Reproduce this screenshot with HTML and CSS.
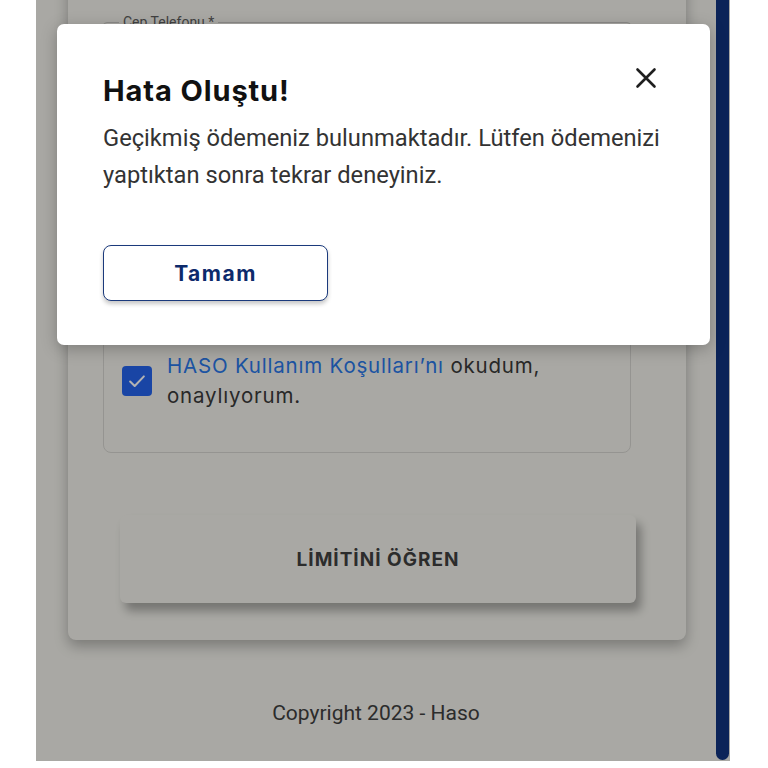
FILE: index.html
```html
<!DOCTYPE html>
<html lang="tr">
<head>
<meta charset="utf-8">
<title>Hata Oluştu</title>
<link rel="stylesheet" href="styles.css">
</head>
<body>
<div class="screen">
  <div class="page">
    <div class="card">
      <fieldset class="field"><legend>Cep Telefonu *</legend></fieldset>
      <div class="terms">
        <span class="checkbox">
          <svg viewBox="0 0 24 24" width="22" height="22"><path d="M4.5 12.5l5 5L19.5 7" fill="none" stroke="#fff" stroke-width="2.2" stroke-linecap="round" stroke-linejoin="round"/></svg>
        </span>
        <p class="terms-text"><span class="terms-link">HASO Kullanım Koşulları’nı</span> okudum, onaylıyorum.</p>
      </div>
      <button class="cta">LİMİTİNİ ÖĞREN</button>
    </div>
    <footer class="copyright">Copyright 2023 - Haso</footer>
  </div>
  <div class="overlay"></div>
  <div class="scrollbar"></div>
  <div class="modal">
    <div class="modal-head">
      <h2 class="modal-title">Hata Oluştu!</h2>
      <button class="close" aria-label="Kapat">
        <svg viewBox="0 0 24 24" width="24" height="24"><path d="M3.5 3.5l17 17M20.5 3.5l-17 17" stroke="#1f1f1f" stroke-width="2.6" stroke-linecap="round"/></svg>
      </button>
    </div>
    <p class="modal-text">Geçikmiş ödemeniz bulunmaktadır. Lütfen ödemenizi yaptıktan sonra tekrar deneyiniz.</p>
    <button class="ok">Tamam</button>
  </div>
</div>
</body>
</html>
```

FILE: styles.css
```css
html, body {
  margin: 0;
  padding: 0;
  background: #ffffff;
}

.screen {
  position: relative;
  margin-left: 36px;
  width: 694px;
  height: 761px;
  overflow: hidden;
  background: #f2f1eb;
}

.page {
  display: flex;
  flex-direction: column;
}

.card {
  margin: -30px 0 0 32px;
  width: 618px;
  box-sizing: border-box;
  padding: 45px 0 37px 0;
  background: #f2f1eb;
  border-radius: 0 0 8px 8px;
  box-shadow: 0 6px 14px rgba(0, 0, 0, 0.28);
  display: flex;
  flex-direction: column;
}

.field {
  margin: 0 0 0 35px;
  width: 528px;
  height: 63px;
  box-sizing: border-box;
  border: 1px solid #c9c8c3;
  border-radius: 4px;
  padding: 0 12px;
}

.field legend {
  padding: 0 4px;
  margin-left: 3px;
  font: 400 14px/1 "Roboto", sans-serif;
  color: #5e5e5e;
}

.terms {
  margin: 222px 0 0 35px;
  width: 528px;
  box-sizing: border-box;
  border: 1px solid #d6d5d0;
  border-radius: 8px;
  padding: 50px 20px 41px 18px;
  display: flex;
  align-items: center;
  gap: 15px;
}

.checkbox {
  flex: none;
  width: 30px;
  height: 30px;
  border-radius: 4px;
  background: #2564ec;
  display: flex;
  align-items: center;
  justify-content: center;
}

.terms-text {
  margin: 0;
  font: 400 20.5px/30px "Inter", sans-serif;
  letter-spacing: 0.8px;
  color: #3a3a3a;
}

.terms-link {
  color: #2a78e8;
}

.cta {
  margin: 62px 0 0 52px;
  width: 516px;
  height: 88px;
  border: none;
  border-radius: 6px;
  background: #f2f1eb;
  box-shadow: 5px 8px 10px rgba(0, 0, 0, 0.3);
  font: 700 19px/1 "Inter", sans-serif;
  color: #404040;
  letter-spacing: 1px;
}

.copyright {
  margin: 61px 14px 0 0;
  text-align: center;
  font: 400 21px/24px "Roboto", sans-serif;
  color: #404040;
}

.overlay {
  position: absolute;
  inset: 0;
  background: rgba(0, 0, 0, 0.3);
}

.scrollbar {
  position: absolute;
  top: 0;
  right: 1px;
  width: 13px;
  height: 760px;
  background: #0b2358;
  border-radius: 0 0 7px 7px;
}

.modal {
  position: absolute;
  left: 21px;
  top: 24px;
  width: 653px;
  height: 321px;
  box-sizing: border-box;
  padding: 50px 30px 0 46px;
  background: #ffffff;
  border-radius: 7px;
  box-shadow: 0 4px 16px rgba(0, 0, 0, 0.25);
}

.modal-head {
  display: flex;
  justify-content: space-between;
  align-items: flex-start;
}

.modal-title {
  margin: 0;
  font: 700 29px/34px "Inter", sans-serif;
  color: #111111;
  letter-spacing: 0.9px;
}

.close {
  margin: -8px 22px 0 0;
  width: 24px;
  height: 24px;
  padding: 0;
  border: none;
  background: none;
  display: flex;
}

.modal-text {
  margin: 12px 0 0;
  font: 400 23.7px/37px "Roboto", sans-serif;
  color: #333333;
}

.ok {
  margin-top: 51px;
  width: 225px;
  height: 56px;
  box-sizing: border-box;
  border: 1.5px solid #1b3a7c;
  border-radius: 8px;
  background: #ffffff;
  box-shadow: 0 3px 4px rgba(0, 0, 0, 0.22);
  font: 700 21px/1 "Inter", sans-serif;
  letter-spacing: 1.5px;
  color: #0d2a6b;
}
```
